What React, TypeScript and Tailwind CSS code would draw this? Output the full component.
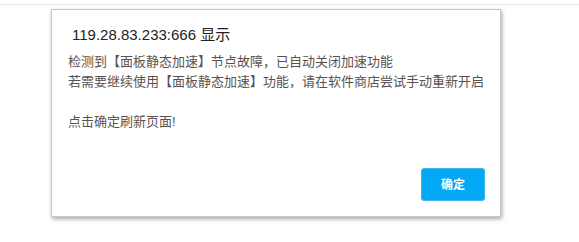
export default function App() {
  return (
    <div
      className="w-[579px] h-[242px] bg-white overflow-hidden"
      style={{ fontFamily: '"Liberation Sans", "Noto Sans CJK SC", sans-serif' }}
    >
      <div className="h-[4px]" />
      <div className="border-t border-[#e6e6e6]" />
      <div className="ml-[51px] mt-[4px] w-[450px] h-[208px] bg-white border border-[#c8c8c8] shadow-[1px_2px_4px_rgba(0,0,0,0.35)] flex flex-col">
        <div className="pt-[15px] pl-[20px] text-[15px] leading-[20px] text-[#222]">
          119.28.83.233:666 显示
        </div>
        <div className="mt-[7px] pl-[16px] text-[13px] leading-[20px] text-[#5a5250]">
          <p>检测到【面板静态加速】节点故障，已自动关闭加速功能</p>
          <p>若需要继续使用【面板静态加速】功能，请在软件商店尝试手动重新开启</p>
          <p className="mt-[20px]">点击确定刷新页面!</p>
        </div>
        <div className="mt-auto flex justify-end pr-[15px] pb-[15px]">
          <button
            type="button"
            className="w-[64px] h-[33px] rounded-[3px] bg-[#03a9f4] border border-[#3db6f2] text-white text-[12px] font-bold"
          >
            确定
          </button>
        </div>
      </div>
    </div>
  );
}
